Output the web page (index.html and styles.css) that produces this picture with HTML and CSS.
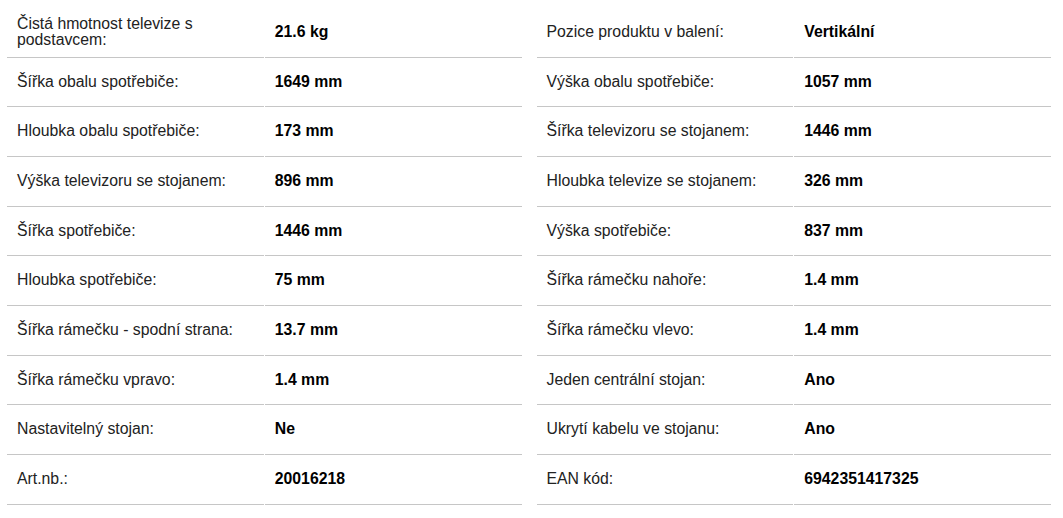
FILE: index.html
```html
<!DOCTYPE html>
<html lang="cs">
<head>
<meta charset="utf-8">
<title>Specifikace</title>
<link rel="stylesheet" href="styles.css">
</head>
<body>
<div class="specs">
  <div class="spec-table">
    <div class="cell label">Čistá hmotnost televize s podstavcem:</div><div class="cell value">21.6 kg</div>
    <div class="cell label">Šířka obalu spotřebiče:</div><div class="cell value">1649 mm</div>
    <div class="cell label">Hloubka obalu spotřebiče:</div><div class="cell value">173 mm</div>
    <div class="cell label">Výška televizoru se stojanem:</div><div class="cell value">896 mm</div>
    <div class="cell label">Šířka spotřebiče:</div><div class="cell value">1446 mm</div>
    <div class="cell label">Hloubka spotřebiče:</div><div class="cell value">75 mm</div>
    <div class="cell label">Šířka rámečku - spodní strana:</div><div class="cell value">13.7 mm</div>
    <div class="cell label">Šířka rámečku vpravo:</div><div class="cell value">1.4 mm</div>
    <div class="cell label">Nastavitelný stojan:</div><div class="cell value">Ne</div>
    <div class="cell label">Art.nb.:</div><div class="cell value">20016218</div>
  </div>
  <div class="spec-table">
    <div class="cell label">Pozice produktu v balení:</div><div class="cell value">Vertikální</div>
    <div class="cell label">Výška obalu spotřebiče:</div><div class="cell value">1057 mm</div>
    <div class="cell label">Šířka televizoru se stojanem:</div><div class="cell value">1446 mm</div>
    <div class="cell label">Hloubka televize se stojanem:</div><div class="cell value">326 mm</div>
    <div class="cell label">Výška spotřebiče:</div><div class="cell value">837 mm</div>
    <div class="cell label">Šířka rámečku nahoře:</div><div class="cell value">1.4 mm</div>
    <div class="cell label">Šířka rámečku vlevo:</div><div class="cell value">1.4 mm</div>
    <div class="cell label">Jeden centrální stojan:</div><div class="cell value">Ano</div>
    <div class="cell label">Ukrytí kabelu ve stojanu:</div><div class="cell value">Ano</div>
    <div class="cell label">EAN kód:</div><div class="cell value">6942351417325</div>
  </div>
</div>
</body>
</html>
```

FILE: styles.css
```css
html, body {
  margin: 0;
  padding: 0;
  background: #fff;
}

body {
  font-family: "Liberation Sans", Arial, Helvetica, sans-serif;
  font-size: 15.8px;
  color: #1e1e1e;
}

.specs {
  display: flex;
  gap: 15px;
  padding: 8px 12px 0 7px;
}

.spec-table {
  flex: 1 1 0;
  display: grid;
  grid-template-columns: 1fr 1fr;
  grid-auto-rows: 49.67px;
  column-gap: 1px;
}

.cell {
  display: flex;
  align-items: center;
  padding: 0 10px;
  border-bottom: 1px solid #c6c6c6;
  line-height: 16.5px;
}

.label {
  color: #222;
}

.value {
  font-weight: bold;
  color: #000;
}
```
